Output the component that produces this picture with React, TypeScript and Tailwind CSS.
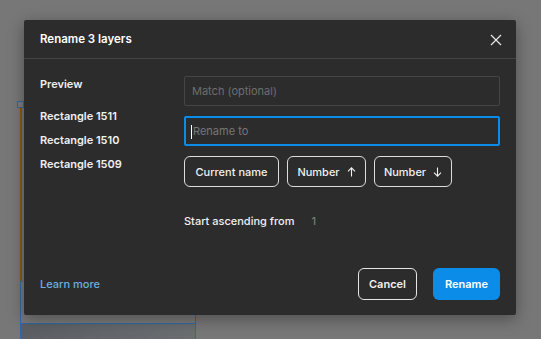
import React from "react";

function ArrowUp() {
  return (
    <svg width="9" height="10" viewBox="0 0 9 10" fill="none" stroke="currentColor" strokeWidth="1.1">
      <path d="M4.5 9.5V1" />
      <path d="M1 4.3L4.5 0.8L8 4.3" />
    </svg>
  );
}

function ArrowDown() {
  return (
    <svg width="9" height="10" viewBox="0 0 9 10" fill="none" stroke="currentColor" strokeWidth="1.1">
      <path d="M4.5 0.5V9" />
      <path d="M1 5.7L4.5 9.2L8 5.7" />
    </svg>
  );
}

export default function App() {
  return (
    <div
      className="relative w-[541px] h-[339px] overflow-hidden bg-[#777777]"
      style={{ fontFamily: "Inter, 'Noto Sans', sans-serif" }}
    >
      {/* canvas behind */}
      <div className="absolute left-[20px] top-[108px] w-[2px] h-[173px] bg-[#8a5a12]" />
      <div className="absolute left-[17px] top-[101px] w-[7px] h-[7px] border border-[#2f6aa3] bg-[#7d7d7d]" />
      <div className="absolute left-[20px] top-[281px] w-[176px] h-[58px] border-l border-r border-[#2f6aa3]">
        <div className="h-px bg-[#6a6a6a]" />
        <div className="h-[41px] bg-[#797979]" />
        <div className="h-px bg-[#2f6aa3]" />
        <div className="h-[15px] bg-gradient-to-r from-[#5b5f63] to-[#6b6e71]" />
      </div>

      {/* modal */}
      <div className="absolute left-[24px] top-[20px] w-[492px] h-[295px] bg-[#2c2c2c] rounded-[2px] shadow-[0_4px_16px_rgba(0,0,0,0.35)] flex flex-col text-[11px] text-[#f0f0f0]">
        <div className="h-[39px] flex items-center justify-between pl-4 pr-[14px] pt-[2px] border-b border-[#444444]">
          <span className="font-semibold text-[11.5px] text-white">Rename 3 layers</span>
          <svg width="12" height="12" viewBox="0 0 12 12" stroke="#e8e8e8" strokeWidth="1.2" fill="none">
            <path d="M1 1L11 11M11 1L1 11" />
          </svg>
        </div>

        <div className="flex-1 flex px-4">
          <div className="w-[144px] pt-[13px] flex flex-col font-semibold">
            <div className="h-[24px] flex items-center">Preview</div>
            <div className="h-[24px] mt-2 flex items-center">Rectangle 1511</div>
            <div className="h-[24px] flex items-center">Rectangle 1510</div>
            <div className="h-[24px] flex items-center">Rectangle 1509</div>
          </div>

          <div className="flex-1 pt-[17px] flex flex-col">
            <div className="h-[30px] border border-[#454545] rounded-[2px] flex items-center pl-[7px] pt-px text-[#6e6e6e]">
              Match (optional)
            </div>
            <div className="h-[30px] mt-[10px] border-2 border-[#0c8ce9] rounded-[2px] flex items-center pl-[5px] pt-px text-[#777777]">
              <span className="w-px h-[14px] bg-white mr-[1px]" />
              Rename to
            </div>
            <div className="mt-[10px] flex gap-2 font-medium">
              <div className="h-[31px] w-[95px] border border-[#dddddd] rounded-[6px] flex items-center justify-center pt-px">
                Current name
              </div>
              <div className="h-[31px] w-[79px] border border-[#dddddd] rounded-[6px] flex items-center justify-center gap-[7px] pt-px">
                Number <ArrowUp />
              </div>
              <div className="h-[31px] w-[78px] border border-[#dddddd] rounded-[6px] flex items-center justify-center gap-[7px] pt-px">
                Number <ArrowDown />
              </div>
            </div>
            <div className="mt-[26px] h-[16px] flex items-center font-medium">
              <span>Start ascending from</span>
              <span className="ml-[17px] text-[#7a7a7a]">1</span>
            </div>
          </div>
        </div>

        <div className="flex items-center justify-between px-4 pb-[15px]">
          <span className="text-[#6eaee0] font-medium pt-px">Learn more</span>
          <div className="flex gap-4 font-semibold">
            <div className="h-[32px] w-[59px] border border-[#e6e6e6] rounded-[6px] flex items-center justify-center pt-px">
              Cancel
            </div>
            <div className="h-[32px] w-[67px] bg-[#0c8ce9] rounded-[6px] flex items-center justify-center text-white pt-px">
              Rename
            </div>
          </div>
        </div>
      </div>
    </div>
  );
}
